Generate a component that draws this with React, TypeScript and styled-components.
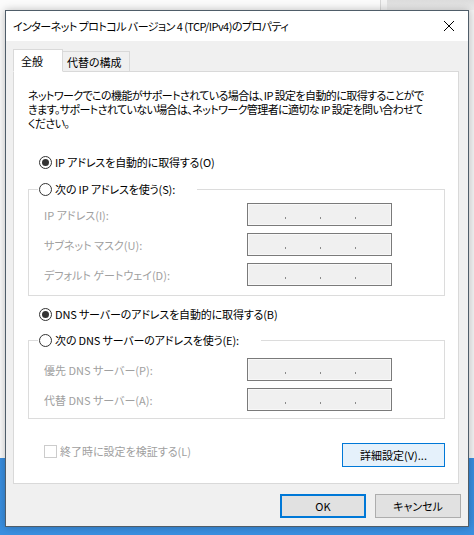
import React from "react";
import styled, { createGlobalStyle, css } from "styled-components";

const Global = createGlobalStyle`
  html, body { margin: 0; padding: 0; }
  body {
    font-family: "Noto Sans CJK JP", "Noto Sans", sans-serif;
    font-size: 11px;
    color: #000;
  }
  * { box-sizing: border-box; }
`;

const Desktop = styled.div`
  position: relative;
  width: 474px;
  height: 535px;
  overflow: hidden;
  background: linear-gradient(180deg, #2f82d6 0%, #3a8fe0 100%);
`;

const BackWindow = styled.div`
  position: absolute;
  left: 0;
  top: 0;
  width: 474px;
  height: 458px;
  background: #f3f3f3;
  display: flex;
  flex-direction: column;
`;

const BackTop = styled.div`
  height: 10px;
  display: flex;
`;

const BackTopLeft = styled.div`
  flex: 0 0 381px;
  background: #fbfbfb;
  border-right: 1px solid #d6d6d6;
`;

const BackTopRight = styled.div`
  flex: 1;
  margin-left: 6px;
  background: linear-gradient(180deg, #dcdcdc, #ececec);
`;

const BackSide = styled.div`
  flex: 1;
  width: 6px;
  background: #fafafa;
  border-right: 1px solid #c8c8c8;
`;

const Dialog = styled.div`
  position: absolute;
  left: 5px;
  top: 10px;
  width: 464px;
  height: 517px;
  border: 1px solid #4f5d69;
  background: #f0f0f0;
  display: flex;
  flex-direction: column;
  box-shadow: 0 0 8px rgba(0, 0, 0, 0.25);
`;

const TitleBar = styled.div`
  height: 30px;
  background: #fff;
  display: flex;
  align-items: center;
  justify-content: space-between;
  padding: 0 10px 0 7px;
`;

const Title = styled.div`
  font-size: 11px;
  font-feature-settings: "palt";
  letter-spacing: -0.55px;
  color: #000;
  white-space: nowrap;
`;

const CloseIcon = styled.svg`
  width: 12px;
  height: 12px;
  margin-right: 3px;
`;

const Body = styled.div`
  flex: 1;
  display: flex;
  flex-direction: column;
  padding: 8px 9px 0 7px;
`;

const Tabs = styled.div`
  display: flex;
  align-items: flex-end;
  height: 22px;
  position: relative;
  z-index: 1;
`;

const Tab = styled.div<{ $active?: boolean }>`
  display: flex;
  align-items: center;
  font-size: 11px;
  font-feature-settings: "palt";
  border: 1px solid #d9d9d9;
  ${(p) =>
    p.$active
      ? css`
          height: 23px;
          margin-bottom: -1px;
          width: 50px;
          padding-left: 7px;
          background: #fff;
          border-bottom-color: #fff;
        `
      : css`
          height: 20px;
          width: 67px;
          padding-left: 4px;
          background: #f0f0f0;
          border-left: none;
          border-bottom: none;
        `}
`;

const Panel = styled.div`
  height: 413px;
  background: #fff;
  border: 1px solid #d9d9d9;
  display: flex;
  flex-direction: column;
  padding: 16px 14px 0 14px;
`;

const Description = styled.p`
  margin: 0;
  font-size: 11px;
  line-height: 14px;
  letter-spacing: -0.6px;
  font-feature-settings: "palt";
  white-space: nowrap;
`;

const RadioRow = styled.label`
  display: flex;
  align-items: center;
  gap: 3px;
  height: 16px;
  font-size: 11px;
  letter-spacing: -0.15px;
  font-feature-settings: "palt";
  white-space: nowrap;
`;

const RadioCircle = styled.span<{ $checked?: boolean }>`
  width: 13px;
  height: 13px;
  border-radius: 50%;
  border: 1px solid #333;
  background: #fff;
  display: inline-flex;
  align-items: center;
  justify-content: center;
  flex: 0 0 13px;
  &::after {
    content: "";
    width: 7px;
    height: 7px;
    border-radius: 50%;
    background: ${(p) => (p.$checked ? "#333" : "transparent")};
  }
`;

const TopRadio = styled.div<{ $mt: number }>`
  margin-top: ${(p) => p.$mt}px;
  padding-left: 11px;
`;

const Group = styled.fieldset<{ $mt: number; $pb: number }>`
  margin: ${(p) => p.$mt}px 0 0 0;
  width: 417px;
  border: 1px solid #dcdcdc;
  padding: 0 0 ${(p) => p.$pb}px 0;
  min-width: 0;
`;

const Legend = styled.legend`
  margin-left: 9px;
  padding: 0 22px 0 1px;
  background: #fff;
`;

const FieldRow = styled.div`
  display: grid;
  grid-template-columns: 203px 145px;
  align-items: center;
  height: 23px;
  margin-top: 7px;
  &:first-of-type {
    margin-top: 0;
  }
`;

const FieldLabel = styled.span`
  color: #a0a0a0;
  font-size: 11px;
  font-feature-settings: "palt";
  white-space: nowrap;
`;

const IpBox = styled.div`
  height: 23px;
  border: 1px solid #7a7a7a;
  background: #f0f0f0;
  box-shadow: inset 0 0 0 1px #f8f8f8;
  display: flex;
  align-items: flex-end;
  padding: 0 0 6px 37px;
  gap: 34px;
`;

const Dot = styled.span`
  width: 1px;
  height: 2px;
  background: #8a8a8a;
`;

const FieldsArea = styled.div<{ $pt: number }>`
  padding: ${(p) => p.$pt}px 0 0 15px;
`;

const BottomRow = styled.div`
  margin-top: 24px;
  display: flex;
  align-items: center;
  justify-content: space-between;
  width: 417px;
`;

const CheckRow = styled.label`
  display: flex;
  align-items: center;
  gap: 3px;
  padding-left: 16px;
  margin-top: -8px;
  color: #a0a0a0;
  font-size: 11px;
  font-feature-settings: "palt";
`;

const CheckBox = styled.span`
  width: 13px;
  height: 13px;
  border: 1px solid #cccccc;
  background: #fff;
`;

const Button = styled.button<{ $variant?: "default" | "focus" | "normal" }>`
  font-family: "Noto Sans CJK JP", "Noto Sans", sans-serif;
  font-size: 11px;
  font-feature-settings: "palt";
  color: #000;
  height: 24px;
  padding: 0;
  display: flex;
  align-items: center;
  justify-content: center;
  ${(p) =>
    p.$variant === "default"
      ? css`
          background: #e1e1e1;
          border: 2px solid #0078d7;
        `
      : p.$variant === "focus"
      ? css`
          background: #e5f1fb;
          border: 1px solid #0078d7;
        `
      : css`
          background: #e1e1e1;
          border: 1px solid #adadad;
        `}
`;

const DetailButton = styled(Button)`
  width: 103px;
`;

const Footer = styled.div`
  display: flex;
  justify-content: flex-end;
  gap: 9px;
  padding: 10px 0 0 0;
  margin-right: -2px;
`;

const FooterButton = styled(Button)`
  width: 86px;
`;

export default function App() {
  return (
    <>
      <Global />
      <Desktop>
        <BackWindow>
          <BackTop>
            <BackTopLeft />
            <BackTopRight />
          </BackTop>
          <BackSide />
        </BackWindow>
        <Dialog>
          <TitleBar>
            <Title>インターネット プロトコル バージョン 4 (TCP/IPv4)のプロパティ</Title>
            <CloseIcon viewBox="0 0 12 12">
              <path d="M1 1 L11 11 M11 1 L1 11" stroke="#000" strokeWidth="1" fill="none" />
            </CloseIcon>
          </TitleBar>
          <Body>
            <Tabs>
              <Tab $active>全般</Tab>
              <Tab>代替の構成</Tab>
            </Tabs>
            <Panel>
              <Description>
                ネットワークでこの機能がサポートされている場合は、IP 設定を自動的に取得することがで
                <br />
                きます。サポートされていない場合は、ネットワーク管理者に適切な IP 設定を問い合わせて
                <br />
                ください。
              </Description>
              <TopRadio $mt={24}>
                <RadioRow>
                  <RadioCircle $checked />
                  IP アドレスを自動的に取得する(O)
                </RadioRow>
              </TopRadio>
              <Group $mt={11} $pb={9}>
                <Legend>
                  <RadioRow>
                    <RadioCircle />
                    次の IP アドレスを使う(S):
                  </RadioRow>
                </Legend>
                <FieldsArea $pt={6}>
                  <FieldRow>
                    <FieldLabel>IP アドレス(I):</FieldLabel>
                    <IpBox><Dot /><Dot /><Dot /></IpBox>
                  </FieldRow>
                  <FieldRow>
                    <FieldLabel>サブネット マスク(U):</FieldLabel>
                    <IpBox><Dot /><Dot /><Dot /></IpBox>
                  </FieldRow>
                  <FieldRow>
                    <FieldLabel>デフォルト ゲートウェイ(D):</FieldLabel>
                    <IpBox><Dot /><Dot /><Dot /></IpBox>
                  </FieldRow>
                </FieldsArea>
              </Group>
              <TopRadio $mt={10}>
                <RadioRow>
                  <RadioCircle $checked />
                  DNS サーバーのアドレスを自動的に取得する(B)
                </RadioRow>
              </TopRadio>
              <Group $mt={10} $pb={7}>
                <Legend>
                  <RadioRow>
                    <RadioCircle />
                    次の DNS サーバーのアドレスを使う(E):
                  </RadioRow>
                </Legend>
                <FieldsArea $pt={10}>
                  <FieldRow>
                    <FieldLabel>優先 DNS サーバー(P):</FieldLabel>
                    <IpBox><Dot /><Dot /><Dot /></IpBox>
                  </FieldRow>
                  <FieldRow>
                    <FieldLabel>代替 DNS サーバー(A):</FieldLabel>
                    <IpBox><Dot /><Dot /><Dot /></IpBox>
                  </FieldRow>
                </FieldsArea>
              </Group>
              <BottomRow>
                <CheckRow>
                  <CheckBox />
                  終了時に設定を検証する(L)
                </CheckRow>
                <DetailButton $variant="focus">詳細設定(V)...</DetailButton>
              </BottomRow>
            </Panel>
            <Footer>
              <FooterButton $variant="default">OK</FooterButton>
              <FooterButton>キャンセル</FooterButton>
            </Footer>
          </Body>
        </Dialog>
      </Desktop>
    </>
  );
}
